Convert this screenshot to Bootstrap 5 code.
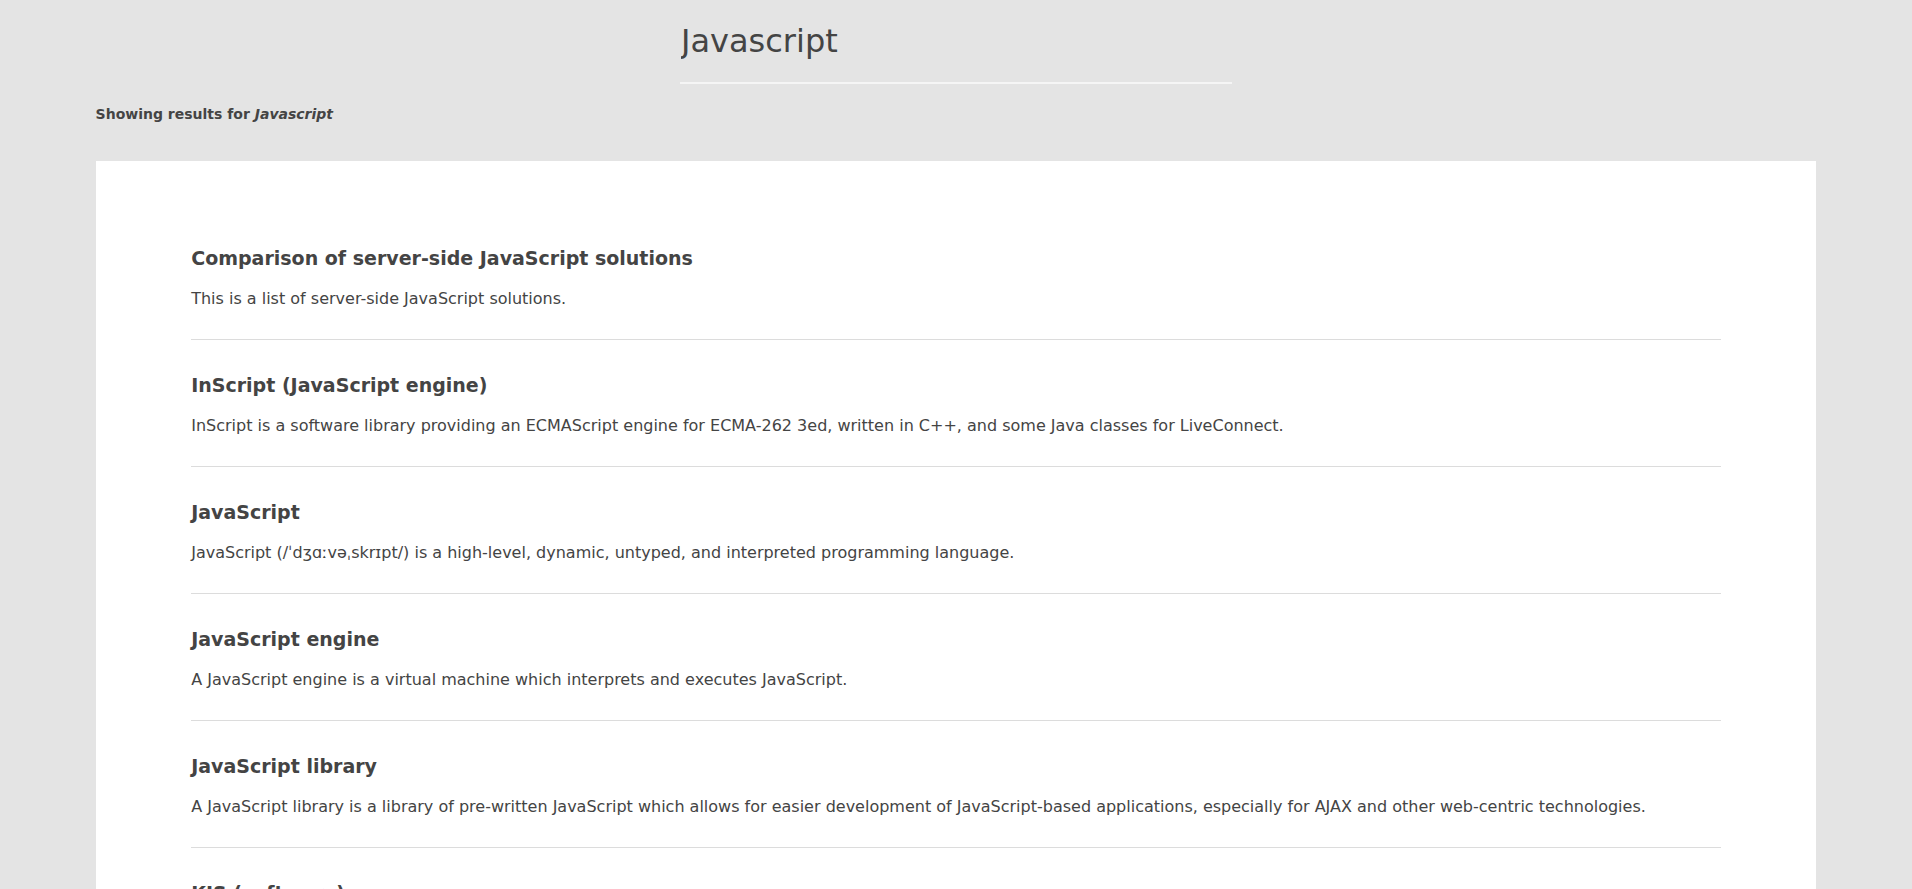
<!DOCTYPE html>
<html lang="en">
<head>
<meta charset="utf-8">
<meta name="viewport" content="width=device-width, initial-scale=1">
<title>Search</title>
<link href="https://cdn.jsdelivr.net/npm/bootstrap@5.3.0/dist/css/bootstrap.min.css" rel="stylesheet">
<style>
  body { background: #e4e4e4; color: #444; font-family: "DejaVu Sans", sans-serif; }
  .page { width: 90%; }
  .search-box {
    max-width: 552px; height: 84px; padding: 0 1px; font-size: 32px; line-height: 40px;
    border-bottom: 2px solid #f5f5f5 !important; color: #444;
  }
  .search-box:focus { background: transparent; color: #444; box-shadow: none; }
  .summary { font-size: 14px; line-height: 20px; margin: 20px 0 37px; }
  .results { padding: 52px 5vw; }
  .result { padding: 33px 0 28px; border-bottom: 1px solid #dcdcdc; }
  .result h2 { font-size: 19px; line-height: 24px; margin-bottom: 17px; }
  .result p { font-size: 16px; line-height: 24px; }
</style>
</head>
<body>
<div class="page mx-auto">
  <form role="search">
    <input type="text" class="search-box form-control border-0 rounded-0 bg-transparent d-block mx-auto" aria-label="Search" value="Javascript">
  </form>
  <h1 class="summary fw-bold">Showing results for <em>Javascript</em></h1>
  <main class="results bg-white">
    <a href="#" class="result d-block text-reset text-decoration-none">
      <h2 class="fw-bold">Comparison of server-side JavaScript solutions</h2>
      <p class="mb-0">This is a list of server-side JavaScript solutions.</p>
    </a>
    <a href="#" class="result d-block text-reset text-decoration-none">
      <h2 class="fw-bold">InScript (JavaScript engine)</h2>
      <p class="mb-0">InScript is a software library providing an ECMAScript engine for ECMA-262 3ed, written in C++, and some Java classes for LiveConnect.</p>
    </a>
    <a href="#" class="result d-block text-reset text-decoration-none">
      <h2 class="fw-bold">JavaScript</h2>
      <p class="mb-0">JavaScript (/ˈdʒɑːvəˌskrɪpt/) is a high-level, dynamic, untyped, and interpreted programming language.</p>
    </a>
    <a href="#" class="result d-block text-reset text-decoration-none">
      <h2 class="fw-bold">JavaScript engine</h2>
      <p class="mb-0">A JavaScript engine is a virtual machine which interprets and executes JavaScript.</p>
    </a>
    <a href="#" class="result d-block text-reset text-decoration-none">
      <h2 class="fw-bold">JavaScript library</h2>
      <p class="mb-0">A JavaScript library is a library of pre-written JavaScript which allows for easier development of JavaScript-based applications, especially for AJAX and other web-centric technologies.</p>
    </a>
    <a href="#" class="result d-block text-reset text-decoration-none">
      <h2 class="fw-bold">KJS (software)</h2>
      <p class="mb-0">KJS is KDE's ECMAScript/JavaScript engine.</p>
    </a>
  </main>
</div>
<script src="https://cdn.jsdelivr.net/npm/bootstrap@5.3.0/dist/js/bootstrap.bundle.min.js"></script>
</body>
</html>
